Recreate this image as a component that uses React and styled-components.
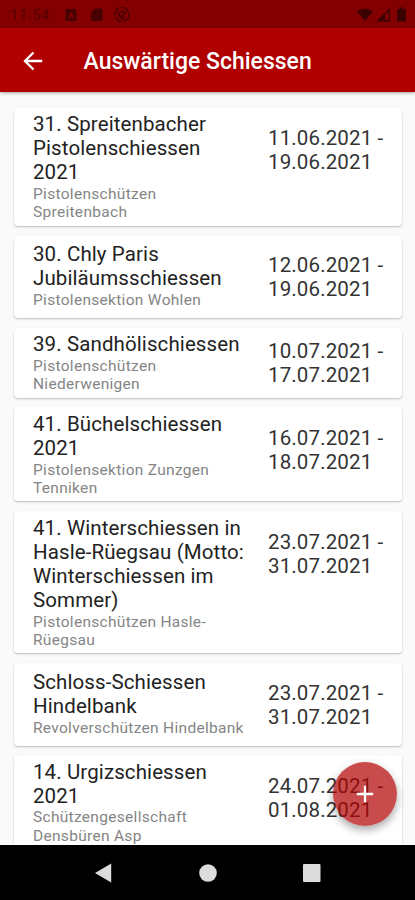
import styled, {createGlobalStyle} from "styled-components";

const events = [
    {title: ["31. Spreitenbacher", "Pistolenschiessen", "2021"], club: ["Pistolenschützen", "Spreitenbach"], from: "11.06.2021", to: "19.06.2021", height: 117.5, gap: 10, top: 4, dateTop: 18},
    {title: ["30. Chly Paris", "Jubiläumsschiessen"], club: ["Pistolensektion Wohlen"], from: "12.06.2021", to: "19.06.2021", height: 82, gap: 10, top: 6.5, dateTop: 17},
    {title: ["39. Sandhölischiessen"], club: ["Pistolenschützen", "Niederwenigen"], from: "10.07.2021", to: "17.07.2021", height: 70, gap: 9, top: 4.5, dateTop: 11.5},
    {title: ["41. Büchelschiessen", "2021"], club: ["Pistolensektion Zunzgen", "Tenniken"], from: "16.07.2021", to: "18.07.2021", height: 94, gap: 10, top: 5.5, dateTop: 19.5},
    {title: ["41. Winterschiessen in", "Hasle-Rüegsau (Motto:", "Winterschiessen im", "Sommer)"], club: ["Pistolenschützen Hasle-", "Rüegsau"], from: "23.07.2021", to: "31.07.2021", height: 142.5, gap: 10, top: 5, dateTop: 19},
    {title: ["Schloss-Schiessen", "Hindelbank"], club: ["Revolverschützen Hindelbank"], from: "23.07.2021", to: "31.07.2021", height: 82.5, gap: 9.5, top: 7, dateTop: 17.5},
    {title: ["14. Urgizschiessen", "2021"], club: ["Schützengesellschaft", "Densbüren Asp"], from: "24.07.2021", to: "01.08.2021", height: 102, gap: 0, top: 4.5, dateTop: 18.5},
];

const EventCard = ({event}) => (
    <Card $height={event.height} $gap={event.gap}>
        <Info $top={event.top}>
            {event.title.map((line) => <Title key={line}>{line}</Title>)}
            {event.club.map((line) => <Club key={line}>{line}</Club>)}
        </Info>
        <Dates $top={event.dateTop}>
            <DateLine>{event.from} -</DateLine>
            <DateLine>{event.to}</DateLine>
        </Dates>
    </Card>
)

const App = () => (
    <Screen>
        <GlobalStyle/>
        <StatusBar>
            <Clock>11:54</Clock>
            <StatusIcons>
                <svg width="68" height="16" viewBox="0 0 68 16" fill="currentColor">
                    <path fillRule="evenodd" d="M.5 3.500Q.5 2 2 2H10Q11.500 2 11.500 3.500V12.500Q11.500 14 10 14H2Q.5 14 .5 12.500ZM6 4.500L3 11H4.800L5.500 9.500H7L7.700 11H9.200Z"/>
                    <path d="M30 1.500H36.500Q37.500 1.500 37.500 2.500V13Q37.500 14 36.500 14H27Q26 14 26 13V5.500Z"/>
                    <circle cx="57" cy="7.500" r="7" fill="none" stroke="currentColor" strokeWidth="1.500" strokeDasharray="9 1.500"/>
                    <path d="M53 6.500Q56 3 61 5.500L58 7.500L59 11.500Q55 11 53 6.500ZM53.500 10.500L56 7.500" fill="none" stroke="currentColor" strokeWidth="1.500"/>
                </svg>
            </StatusIcons>
            <Signals>
                <svg width="52" height="16" viewBox="0 0 52 16" fill="currentColor">
                    <path d="M0 4.500Q8 -1.500 16 4.500L8 14Z"/>
                    <path fillRule="evenodd" d="M19 14.500L33 1V14.500ZM28 7.800V13H31.700V4.200Z"/>
                    <path d="M42.500 2V.5H46.500V2H48Q49 2 49 3V13.500Q49 14.500 48 14.500H41Q40 14.500 40 13.500V3Q40 2 41 2Z"/>
                </svg>
            </Signals>
        </StatusBar>
        <AppBar>
            <BackButton aria-label="Zurück">
                <svg width="20" height="20" viewBox="0 0 20 20" fill="none" stroke="currentColor" strokeWidth="2.300">
                    <path d="M19.200 10H2.200M10.500 1.500L2 10L10.500 18.500"/>
                </svg>
            </BackButton>
            <Heading>Auswärtige Schiessen</Heading>
        </AppBar>
        <List>
            {events.map((event) => <EventCard key={event.title[0]} event={event}/>)}
            <AddButton aria-label="Hinzufügen">
                <svg width="18" height="18" viewBox="0 0 18 18" stroke="currentColor" strokeWidth="2.300">
                    <path d="M9 .8V17.200M.8 9H17.200"/>
                </svg>
            </AddButton>
        </List>
        <NavBar>
            <svg width="18" height="20" viewBox="0 0 18 20" fill="currentColor"><path d="M16.200 .5V19.500L0 10Z"/></svg>
            <svg width="18" height="18" viewBox="0 0 18 18" fill="currentColor"><circle cx="9" cy="9" r="8.800"/></svg>
            <svg width="18" height="18" viewBox="0 0 18 18" fill="currentColor"><rect width="17.500" height="18" rx="1"/></svg>
        </NavBar>
    </Screen>
)

const GlobalStyle = createGlobalStyle`
  body {
    margin: 0;
    background: #fafafa;
  }
  svg {
    display: block;
  }
`
const Screen = styled.div`
  display: flex;
  flex-direction: column;
  height: 900px;
  overflow: hidden;
  font-family: Roboto, sans-serif;
  background: #fafafa;
`
const StatusBar = styled.div`
  display: flex;
  align-items: center;
  flex: none;
  height: 28px;
  box-sizing: border-box;
  padding: 1px 6px 0 10px;
  background: #830000;
  color: #3b0000;
`
const Clock = styled.span`
  width: 55px;
  font-size: 15px;
  letter-spacing: 0.5px;
  color: #560000;
`
const StatusIcons = styled.div`
  color: #480000;
`
const Signals = styled.div`
  margin-left: auto;
`
const AppBar = styled.header`
  display: flex;
  align-items: center;
  flex: none;
  height: 64px;
  box-sizing: border-box;
  padding: 2px 0 0 23px;
  background: #b00000;
  color: #fff;
  z-index: 1;
  box-shadow: 0 1px 3px rgba(0, 0, 0, 0.35);
`
const BackButton = styled.button`
  display: flex;
  width: 60.5px;
  padding: 0;
  border: 0;
  background: none;
  color: inherit;
`
const Heading = styled.h1`
  margin: 0;
  font-size: 23px;
  font-weight: 500;
`
const List = styled.main`
  position: relative;
  flex: 1;
  min-height: 0;
  overflow: hidden;
  padding: 16px 13px 0 14px;
`
const Card = styled.div`
  display: flex;
  height: ${props => props.$height}px;
  margin-bottom: ${props => props.$gap}px;
  border-radius: 4px;
  background: #fff;
  box-shadow: 0 1px 2px rgba(0, 0, 0, 0.25);
`
const Info = styled.div`
  width: 235px;
  padding: ${props => props.$top}px 0 0 19px;
  box-sizing: border-box;
`
const Dates = styled.div`
  padding: ${props => props.$top}px 0 0 19px;
`
const Title = styled.div`
  font-size: 20.5px;
  line-height: 24.2px;
  letter-spacing: 0.1px;
  color: #222;
  white-space: nowrap;
`
const DateLine = styled(Title)`
  letter-spacing: 0.13px;
  color: #333;
`
const Club = styled.div`
  position: relative;
  top: 0.5px;
  font-size: 15.5px;
  line-height: 18.3px;
  letter-spacing: 0.3px;
  color: #858585;
  white-space: nowrap;
`
const AddButton = styled.button`
  position: absolute;
  right: 18px;
  bottom: 19px;
  display: flex;
  align-items: center;
  justify-content: center;
  width: 64px;
  height: 64px;
  padding: 0;
  border: 0;
  border-radius: 50%;
  background: rgba(176, 0, 0, 0.7);
  color: #fff;
  box-shadow: 0 4px 8px rgba(0, 0, 0, 0.35);
`
const NavBar = styled.nav`
  display: flex;
  align-items: center;
  justify-content: center;
  gap: 86px;
  flex: none;
  height: 55px;
  background: #000;
  color: #dcdcdc;
`

export default App
